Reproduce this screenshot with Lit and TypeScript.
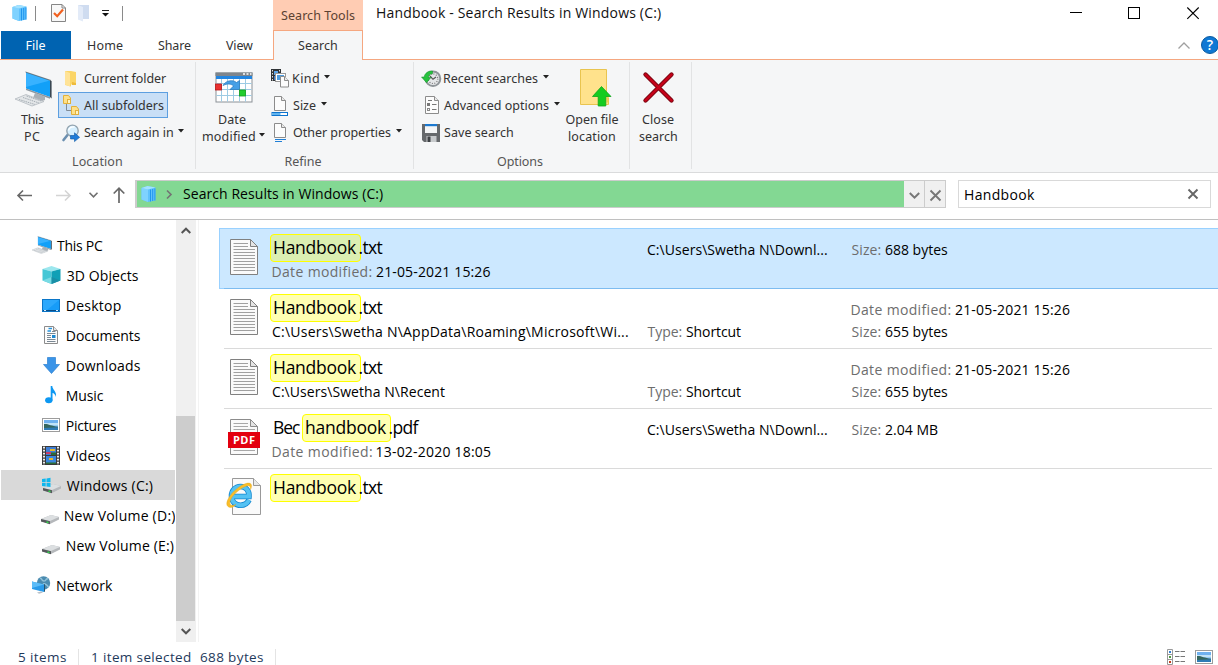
import { LitElement, html, css, svg, nothing } from "lit";
import { customElement, property } from "lit/decorators.js";

const canvas = document.createElement("canvas").getContext("2d")!;

/** A single-line label whose tracking is tuned so that its ink spans `w` pixels. */
@customElement("fit-text")
class FitText extends LitElement {
  @property() text = "";
  @property({ type: Number }) w = 0;
  static styles = css`
    :host { display: block; flex: none; white-space: pre; overflow: visible; }
    span { display: block; }
  `;
  render() {
    return html`<span>${this.text}</span>`;
  }
  updated() {
    const span = this.renderRoot.querySelector("span") as HTMLElement;
    const cs = getComputedStyle(this);
    canvas.font = `${cs.fontWeight} ${cs.fontSize} ${cs.fontFamily}`;
    const m = canvas.measureText(this.text);
    const ink = m.actualBoundingBoxLeft + m.actualBoundingBoxRight;
    const n = this.text.length - 1;
    this.style.width = `${this.w}px`;
    if (n > 0) span.style.letterSpacing = `${(this.w - ink) / n}px`;
    span.style.marginLeft = `${m.actualBoundingBoxLeft}px`;
  }
}

const t = (text: string, w: number, cls = "") =>
  html`<fit-text class=${cls} .text=${text} .w=${w}></fit-text>`;

const ic = (w: number, h: number, body: unknown, cls = "") =>
  html`<svg class="ic ${cls}" width=${w} height=${h} viewBox="0 0 ${w} ${h}">${body}</svg>`;

const arrow = ic(6, 4, svg`<path d="M0 0H6L3 3.500Z" fill="#222"/>`, "arrow");

const cube = ic(15, 18, svg`
  <path d="M.5 3L6.500 1L14.500 2.500V15.500L7 17L.5 14.500Z" fill="#5fc1fc"/>
  <path d="M.5 3L7 4.500V17L.5 14.500Z" fill="#7fd2ff"/>
  <path d="M.5 3L6.500 1L14.500 2.500L7 4.500Z" fill="#a3e2ff"/>
  <path d="M9.500 4.500V16.500M11.700 4V16M13.900 3.500V15.500" stroke="#2196ee" stroke-width="1"/>`);

const pcShape = svg`
  <path d="M11 1.500L35 9.500V26L11 17.500Z" fill="#12a0f8"/>
  <path d="M11 1.500L35 9.500L11 16Z" fill="#38b2ff"/>
  <path d="M10.500 1L36 9.500" stroke="#3a4752" stroke-width=".7"/>
  <path d="M35 9.500L36.600 10V27.500L35 26Z" fill="#3a4752"/>
  <path d="M11 17.500L35 26V27.800L11 19Z" fill="#8e979f"/>
  <path d="M20 22L30 25.700V29L26 30.500L18 27Z" fill="#a8afb5"/>
  <path d="M0 28L11 23.500L29 30.500L17 35Z" fill="#e3e6e8" stroke="#b4bac0" stroke-width=".8"/>
  <path d="M4 28.500L20 33.500M8 26.500L24 32M11.500 25L27 30.300" stroke="#9da6ae" stroke-width=".9" stroke-dasharray="1.500 .8"/>`;
const pcBig = html`<svg class="ic" width="37" height="36" viewBox="0 0 37 36">${pcShape}</svg>`;
const pcSmall = html`<svg class="ic" width="20" height="18" viewBox="0 0 37 36" preserveAspectRatio="none">${pcShape}</svg>`;

const folder = ic(13, 17, svg`
  <path d="M1 1H7L12 2V14.500H7V16.500L1 15Z" fill="#fbd567"/>
  <path d="M1 1L6 3V16.500L1 14.500Z" fill="#ffe397"/><path d="M8 12V15H12V13Z" fill="#eebb3c"/>`);
const folderPale = ic(13, 18, svg`
  <path d="M1 1H12V15H6V17L1 15Z" fill="#cfdcf0"/><path d="M1 1L6 3V17.500L1 15.500Z" fill="#e3ebf8"/>`);
const subfolders = ic(17, 20, svg`
  <path d="M3.500 9V15.500H9" fill="none" stroke="#7f8b97" stroke-width="1"/>
  <path d="M.5 .5H5.500L7.500 3V8.500H.5Z" fill="#fde08a" stroke="#e2b13c"/><rect x="4.500" y="4.500" width="3" height="4" fill="#fff3c4" stroke="#e2b13c"/>
  <path d="M8.500 11.500H13.500L15.500 14V19.500H8.500Z" fill="#fde08a" stroke="#e2b13c"/><rect x="12.500" y="15.500" width="3" height="4" fill="#fff3c4" stroke="#e2b13c"/>`);
const searchAgain = ic(18, 18, svg`
  <path d="M5.500 11L1.500 16" stroke="#6b8fb0" stroke-width="2.600" stroke-linecap="round"/>
  <circle cx="10.500" cy="6.800" r="5.700" fill="#d5efff" stroke="#93a3af" stroke-width="1.400"/>
  <path d="M6.500 6.500C7.500 3.500 10 2.600 12.500 3" stroke="#fff" fill="none" stroke-width="1.300"/>
  <path d="M8.500 11.500H12.500V8.800L17.600 13.300L12.500 17.600V15H8.500Z" fill="#1f7bd8" stroke="#0f5aa8" stroke-width=".6"/>`);

const calendar = ic(38, 31, svg`
  <rect x="1" y="1" width="36" height="29" fill="#fff" stroke="#8b9197"/>
  <rect x=".5" y=".5" width="37" height="3.500" fill="#7e858c"/>
  <path d="M28 2H30M31.500 2H33.500M35 2H36.500" stroke="#fff" stroke-width="1.400"/>
  <rect x="1" y="4" width="36" height="3" fill="#2285e0"/>
  <path d="M6.500 7V29.500M12.500 7V29.500M18.500 7V29.500M24.500 7V29.500M30.500 7V29.500M1.500 11.500H36.500M1.500 17.500H36.500M1.500 23.500H36.500" stroke="#9dcbe4"/>
  <path d="M8 13.500C11 8 18 7.500 21.500 10.500L24.500 8.500V17.500H15L18.500 14C16 11.500 12 11.500 8 13.500Z" fill="#459fe6" stroke="#2274ba" stroke-width=".7"/>
  <rect x=".5" y="12" width="6" height="6" fill="#e93030" stroke="#b81717" stroke-width=".8"/>
  <rect x="24.500" y="18" width="6" height="6" fill="#22cd2d" stroke="#149c1d" stroke-width=".8"/>`);

const page = (x: number, y: number, w: number, h: number, c = "#8c8c8c") => svg`
  <path d="M${x} ${y}H${x + w - 4}L${x + w} ${y + 4}V${y + h}H${x}Z" fill="#fcfcfc" stroke=${c}/>
  <path d="M${x + w - 4} ${y}V${y + 4}H${x + w}" fill="#e9e9e9" stroke=${c}/>`;

const kind = ic(18, 19, svg`
  <rect x="0" y="0" width="10" height="12" fill="#2f3336"/>
  <path d="M1.500 1V12M8.500 1V12" stroke="#ddd" stroke-width="1" stroke-dasharray="1.500 1.500"/>
  <rect x="3" y="2" width="4" height="4" fill="#5aa3e8"/><rect x="3" y="7" width="4" height="4" fill="#3577c9"/>
  <rect x="4.500" y="4.500" width="10" height="8" fill="#fff" stroke="#999"/><rect x="6" y="6" width="7" height="5" fill="#4c9ce0"/>
  ${page(9.5, 7.500, 8, 10.5)}`);
const sizeIc = ic(18, 20, svg`${page(3.5, 0.5, 11, 14)}
  <rect x="1" y="16.500" width="15.500" height="3" fill="#fff" stroke="#0d74cf"/><rect x="1.500" y="17" width="8" height="2" fill="#60b4ee"/>`);
const propsIc = ic(18, 20, svg`${page(3.5, 0.5, 11, 14)}
  <path d="M4 16.500H15M4 18.500H11" stroke="#1f7fd6"/>`);

const recent = ic(19, 18, svg`
  <circle cx="11" cy="8.700" r="7.300" fill="#e4e6e8" stroke="#8f9599" stroke-width="2"/>
  <circle cx="11" cy="8.700" r="4.800" fill="none" stroke="#777" stroke-width="1.200" stroke-dasharray="1 1.500"/>
  <path d="M8 6L11 9.300L14 7" stroke="#555" fill="none" stroke-width="1.200"/>
  <path d="M10.500 1C6 .600 2.600 3.500 2.200 7H-.500L4.500 12.700L9 7.500H6.400C6.700 5 8 3.800 10.500 3.800Z" fill="#27c23f" stroke="#128a28" stroke-width=".5"/>`);
const advanced = ic(17, 19, svg`${page(2.5, 0.5, 13, 17)}
  <rect x="4" y="7" width="3" height="3" fill="#777"/><rect x="4.500" y="12.500" width="2" height="2" fill="none" stroke="#888"/>
  <path d="M5 4.500H9M9 8.500H13.500M9 13.500H13.500" stroke="#777"/>`);
const save = ic(18, 18, svg`
  <path d="M0 0H18V18H2L0 16Z" fill="#66696c"/><rect x="3" y="0" width="12" height="9" fill="#f4f5f6"/>
  <rect x="3" y="0" width="12" height="2.200" fill="#1c79d0"/><rect x="4.500" y="12" width="10" height="6" fill="#c7cacc"/><rect x="5.500" y="12.500" width="3" height="5.500" fill="#3e4144"/>`);
const openFile = ic(32, 38, svg`
  <path d="M.5 .5H26.500V27L28.500 29V35.500H.500Z" fill="#ffe28c" stroke="#e9c44f"/>
  <path d="M26.500 27V33.500H28.500V28Z" fill="#f4cd54"/>
  <path d="M21.500 17.500L31 27.500H25.800V37H18.200V27.500H12.500Z" fill="#15cc20" stroke="#0fa619" stroke-width=".8"/>`);
const closeBig = ic(31, 31, svg`
  <path d="M2.500 2.500L28.500 28.500M28.500 2.500L2.500 28.500" stroke="#7f0713" stroke-width="4.400" stroke-linecap="round"/>
  <path d="M2.500 2.500L28.500 28.500M28.500 2.500L2.500 28.500" stroke="#c80219" stroke-width="2.400" stroke-linecap="round"/>`);

const checkDoc = ic(15, 18, svg`
  <path d="M.5 .5H11L14.500 4V17.500H.500Z" fill="#f8f8f8" stroke="#868686"/><path d="M11 .5V4H14.500" fill="none" stroke="#868686"/>
  <path d="M3 9L6.200 12.200L12 5.500" fill="none" stroke="#f1601f" stroke-width="2.200"/>`);
const qatArrow = ic(7, 7, svg`<path d="M0 .5H7" stroke="#222"/><path d="M0 3H7L3.500 6.500Z" fill="#111"/>`);

const objects3d = ic(19, 18, svg`
  <path d="M.500 3L9.500 0L18.500 3L9.500 5.500Z" fill="#9ce7ee"/><path d="M.500 3L9.500 5.500V18L.500 14.500Z" fill="#45c7d6"/>
  <path d="M9.500 5.500L18.500 3V14.500L9.500 18Z" fill="#10a0b6"/><path d="M.500 14.500L9.500 11V18Z" fill="#79dbe4"/><path d="M9.500 11L18.500 14.500L9.500 18Z" fill="#1a8fa6"/>`);
const desktop = ic(18, 13, svg`
  <rect x=".5" y=".5" width="17" height="12" fill="#179cf8" stroke="#0b76c8"/><path d="M1 11.500H17" stroke="#0b4d86"/>
  <path d="M1 1H17L5 11H1Z" fill="#3bb0ff" opacity=".6"/><path d="M2 11.500H4M14 11.500H16" stroke="#d9efff"/>`);
const documents = ic(16, 18, svg`${page(1.5, 0.5, 13, 17)}
  <path d="M5.500 2.500H9M4.500 5H8" stroke="#2493dd" stroke-width="1.500"/>
  <path d="M9 5.500H12.500M4 7.500H12.500M4 9.500H8M4 11.500H8M4 13.500H12.500M4 15.500H12.500" stroke="#7a8894"/><rect x="9" y="9" width="3.500" height="3" fill="#1f88cf"/>`);
const downloads = ic(17, 17, svg`<path d="M4.500 .5H12.500V7.500H16.500L8.500 16.500L.500 7.500H4.500Z" fill="#3a94e8" stroke="#2b7fd0" stroke-width=".7"/>`);
const music = ic(12, 18, svg`
  <ellipse cx="3.800" cy="14.300" rx="3.700" ry="3" fill="#0d98f2"/>
  <path d="M5.700 0H7.300C7.500 4 11.800 5 11 11C10.300 8.500 9 7.200 7.500 7V14.500H5.700Z" fill="#0d98f2"/>`);
const picture = (w: number, h: number) => html`<svg class="ic" width=${w} height=${h} viewBox="0 0 18 14" preserveAspectRatio="none">
  <rect x=".5" y=".5" width="17" height="13" fill="#fff" stroke="#9c9c9c"/><rect x="2" y="2" width="14" height="10" fill="#6fb1ef"/>
  <path d="M2 5H16V7.500H2Z" fill="#c2e3f7"/><path d="M2 6C6 5.500 9 8 16 8.700V12H2Z" fill="#35665e"/><path d="M2 10L16 9.200V12H2Z" fill="#2f7bb5"/></svg>`;
const videos = ic(18, 19, svg`
  <rect width="18" height="19" fill="#3a3a3a"/><path d="M2 .800V19M16 .800V19" stroke="#eee" stroke-width="2" stroke-dasharray="1.600 1.400"/>
  <rect x="4" y="1" width="10" height="8" fill="#3f7ed4"/><rect x="4" y="10" width="10" height="8" fill="#3a86dc"/>
  <path d="M8 3H13V5H8ZM7 12H11V14H7Z" fill="#e6b62c"/><path d="M4 6H9V8H4Z" fill="#c73a6a"/><path d="M9 6.500H14V9H9ZM4 16.500H14V18H4Z" fill="#2d6b36"/>`);
const driveBody = svg`
  <path d="M0 11L10 7L18 9V11.500L9 16L0 13.200Z" fill="#b5b8bb"/><path d="M0 11L10 7L18 9L9 13Z" fill="#dcdfe1"/>
  <path d="M0 11L9 13.200V16.200L0 13.500Z" fill="#55585b"/><path d="M5.500 14L7.500 14.600" stroke="#2fe04a" stroke-width="1.400"/>`;
const drive = ic(18, 18, svg`<g transform="translate(0,2)">${driveBody}</g>`);
const driveC = ic(19, 17, svg`<g transform="translate(1,0)">${driveBody}</g>
  <path d="M0 2L3.700 1.500V5H0ZM4.500 1.400L8.500 .800V5H4.500ZM0 5.800H3.700V9.400L0 8.900ZM4.500 5.800H8.500V10L4.500 9.500Z" fill="#10b7ee"/>`);
const network = ic(19, 18, svg`
  <circle cx="11.500" cy="7" r="6.700" fill="#4a8bb0"/><path d="M8 2C11 3 9 5 12 5C15 5 13 2 16 3M11 8C13 7 15 9 16.500 11" stroke="#8fc0d8" stroke-width="1.500" fill="none"/>
  <path d="M0 5.500L12 8.500V16L0 13Z" fill="#2a9bea"/><path d="M0 5.500L12 8.500L0 12Z" fill="#5bbcf8"/><path d="M12 8.500L13 8V15.500L12 16Z" fill="#25536f"/>
  <path d="M5 16.500L9 15.600L11 16.500L7 17.800Z" fill="#b7bec4"/>`);

const textDoc = ic(28, 36, svg`
  <path d="M.5 .5H20.500L27.500 7.500V35.500H.500Z" fill="#fafafa" stroke="#808080"/><path d="M20.500 .5V7.500H27.500Z" fill="#e4e4e4" stroke="#808080"/>
  <path d="M3.500 4.500H18M3.500 7.500H18M3.500 10.500H25M3.500 13.500H25M3.500 16.500H25M3.500 19.500H25M3.500 22.500H25M3.500 25.500H25M3.500 28.500H25M3.500 31.500H25" stroke="#a0a0a0"/>`);
const pdfDoc = ic(32, 36, svg`
  <path d="M2.500 .5H22.500L29.500 7.500V35.500H2.500Z" fill="#fafafa" stroke="#8c8c8c"/><path d="M22.500 .5V7.500H29.500Z" fill="#e4e4e4" stroke="#8c8c8c"/>
  <path d="M5.500 4.500H20M5.500 7.500H20M5.500 10.500H27M5.500 31.500H27" stroke="#a8a8a8"/>
  <rect x="0" y="13" width="32" height="16" fill="#e3000f"/>
  <text x="16.200" y="25" text-anchor="middle" font-family="Open Sans, sans-serif" font-weight="700" font-size="11" letter-spacing=".5" fill="#fff">PDF</text>`);
const ieDoc = ic(34, 37, svg`
  <path d="M5.500 .5H26.500L33.500 7.500V36.500H5.500Z" fill="#fafafa" stroke="#999"/><path d="M26.500 .5V7.500H33.500" fill="#e8e8e8" stroke="#999"/>
  <path d="M5.500 18.500H22C22.500 12.500 18.500 8.500 13.500 8.500C8 8.500 4.500 13 4.500 18C4.500 23.500 8.500 27.200 13.500 27.200C17.500 27.200 20.500 25.200 22 22" fill="none" stroke="#1689d0" stroke-width="5.600"/>
  <path d="M6.500 18.500H22C22.500 12.500 18.500 8.500 13.500 8.500C8 8.500 4.500 13 4.500 18C4.500 23.500 8.500 27.200 13.500 27.200C17.500 27.200 20.500 25.200 22 22" fill="none" stroke="#54c2f3" stroke-width="4"/>
  <path d="M1 28.500C-4 24 8 9 19 5.500C24 4 26 7 23.500 11.500C24 8.500 22.500 7 19.500 8C10 11.500 .8 22 3.300 26.500C4.500 28 7 27.500 9 26.500C6 29.800 3 30 1 28.500Z" fill="#f9bd2a" stroke="#e4a312" stroke-width=".4"/>`);

const nav: [unknown, string, number, number][] = [
  [pcSmall, "This PC", 46, 0], [objects3d, "3D Objects", 72, 1], [desktop, "Desktop", 54, 1],
  [documents, "Documents", 74, 1], [downloads, "Downloads", 74, 1], [music, "Music", 37, 1],
  [picture(18, 14), "Pictures", 50, 1], [videos, "Videos", 44, 1], [driveC, "Windows (C:)", 86, 1],
  [drive, "New Volume (D:)", 110.5, 1], [drive, "New Volume (E:)", 107, 1], [network, "Network", 56, 0],
];

type Pair = [string, number, string, number];
interface Result {
  icon: unknown; pre?: [string, number]; hit: [string, number]; ext: [string, number];
  sub?: Pair | [string, number]; mid?: Pair | [string, number]; right?: Pair[];
}
const pathCol: [string, number] = ["C:\\Users\\Swetha N\\Downl...", 180];
const stamp = "21-05-2021 15:26";
const results: Result[] = [
  { icon: textDoc, hit: ["Handbook", 83], ext: [".txt", 23], sub: ["Date modified:", 99, stamp, 114.5], mid: pathCol, right: [["Size:", 29, "688 bytes", 63]] },
  { icon: textDoc, hit: ["Handbook", 83], ext: [".txt", 23], sub: ["C:\\Users\\Swetha N\\AppData\\Roaming\\Microsoft\\Wi...", 356], mid: ["Type:", 34, "Shortcut", 55], right: [["Date modified:", 99, stamp, 115], ["Size:", 29, "655 bytes", 63]] },
  { icon: textDoc, hit: ["Handbook", 83], ext: [".txt", 23], sub: ["C:\\Users\\Swetha N\\Recent", 173], mid: ["Type:", 34, "Shortcut", 55], right: [["Date modified:", 99, stamp, 115], ["Size:", 29, "655 bytes", 63]] },
  { icon: pdfDoc, pre: ["Bec", 26], hit: ["handbook", 81], ext: [".pdf", 30], sub: ["Date modified:", 99.5, "13-02-2020 18:05", 114.5], mid: pathCol, right: [["Size:", 29, "2.04 MB", 53]] },
  { icon: ieDoc, hit: ["Handbook", 83], ext: [".txt", 23] },
];
const line = (p?: Pair | [string, number]) =>
  !p ? nothing : p.length === 2 ? html`<div class="ln">${t(p[0], p[1])}</div>`
    : html`<div class="ln">${t(p[0], p[1], "dim")}${t(p[2]!, p[3]!)}</div>`;

@customElement("app-root")
class AppRoot extends LitElement {
  static styles = css`
    :host { display: flex; flex-direction: column; box-sizing: border-box; width: 1218px; height: 665px; overflow: hidden; background: #fff; color: #000; font: 14px/20px "Open Sans", "Noto Sans", sans-serif; }
    * { box-sizing: border-box; }
    .ic { display: block; flex: none; overflow: visible; }
    .head { display: grid; grid-template-columns: 273px 90px 1fr; grid-template-rows: 31px 29px; flex: none; font-size: 12.5px; color: #333; font-family: "Noto Sans", sans-serif; }
    .qat { display: flex; align-items: center; padding: 0 0 5px 12px; }
    .qat .sep { width: 1px; height: 15px; background: #8a8a8a; margin: 0 15px 0 8px; }
    .qat .g1 { width: 11px; } .qat .g2 { width: 12px; } .qat .g3 { width: 5px; }
    .tools { background: #ffccb3; display: flex; justify-content: center; align-items: center; color: #5b4132; border-bottom: 1px solid #f5a780; padding-top: 2px; }
    .title { display: flex; align-items: center; justify-content: space-between; padding: 0 19px 5px 14px; font: 14px/20px "Open Sans", sans-serif; color: #111; }
    .caps { display: flex; align-items: center; gap: 46px; }
    .caps .last { margin-left: 1px; }
    .tabs { display: flex; padding-left: 1px; border-bottom: 1px solid #f5a780; line-height: 30px; height: 29px; }
    .file { width: 70px; background: #0063b1; color: #fff; display: flex; justify-content: center; margin-right: 17px; }
    .tabs .h { margin-right: 35px; }
    .active { display: flex; justify-content: center; border: 1px solid #f5a780; border-width: 0 1px; background: #f5f6f7; line-height: 30px; padding-right: 1px; height: 29px; }
    .rest { display: flex; justify-content: flex-end; align-items: center; gap: 11px; border-bottom: 1px solid #f5a780; margin-left: -1px; }
    .rest .help { margin-right: -1px; }
    .ribbon { display: flex; height: 113px; flex: none; background: #f5f6f7; border-bottom: 1px solid #dadbdc; padding: 2px 0 3px 1px; font: 12.5px/17px "Noto Sans", sans-serif; color: #333; }
    .grp { display: flex; flex-direction: column; border-right: 1px solid #e2e3e4; padding-top: 3px; }
    .loc { width: 195px; } .ref { width: 218px; } .opt { width: 216px; } .cls { width: 62px; }
    .cols { display: flex; height: 81px; }
    .cap { align-self: center; margin-top: 6px; line-height: 20px; color: #555; }
    .loc .cap { margin-right: 1px; } .ref .cap { margin-right: 2px; } .opt .cap { margin-right: 3px; }
    .big { display: flex; flex-direction: column; align-items: center; }
    .big .box { height: 46px; display: flex; align-items: center; padding-bottom: 2px; }
    .row { display: flex; align-items: center; height: 27px; line-height: 27px; }
    .row .slot { display: flex; justify-content: center; flex: none; }
    .arrow { margin: 0 0 3px 5px; }
    .sel { height: 26px; width: 110px; margin-bottom: 1px; background: #c9dff6; border: 1px solid #5d9fe0; }
    .loc .slot { width: 17px; margin: 0 5px 0 4px; } .loc .sel .slot { margin-left: 4px; margin-right: 4px; }
    .loc .big { width: 57px; padding-left: 6px; } .loc .big .box { padding: 2px 0 0 1px; } .ref .big { width: 75px; padding-right: 2px; } .ref .slot { width: 18px; margin-right: 4px; } .ref .box { margin-left: 2px; }
    .opt .small { width: 142px; padding-left: 8px; } .opt .slot { width: 18px; margin-right: 4px; } .opt .big { width: 72px; } .opt .big .box { padding: 0 0 0 7px; } .cls .big { width: 56px; } .cls .box { margin-left: 1px; }
    .modrow { display: flex; align-items: center; margin-left: 3px; } .modrow .arrow { margin-left: 4px; }
    .addr { display: flex; align-items: center; height: 47px; flex: none; border-bottom: 1px solid #c0c0c0; padding-left: 17px; }
    .navs { display: flex; align-items: center; width: 118px; padding-bottom: 2px; }
    .navs .f { margin: 0 18px 0 24px; } .navs .u { margin-left: 15px; }
    .crumb { display: flex; width: 811px; height: 28px; margin-bottom: 4px; border: 1px solid #ccc; border-left-width: 2px; background: #f0f0f0; }
    .crumb .green { display: flex; align-items: center; width: 767px; background: #83d893; padding: 0 0 0 4px; }
    .crumb .chev { margin: 0 11px 0 10px; }
    .crumb .b { width: 20px; display: flex; align-items: center; justify-content: center; padding: 2px 0 0 1px; }
    .crumb .b2 { border-left: 1px solid #ccc; width: 21px; }
    .find { display: flex; align-items: center; justify-content: space-between; width: 253px; height: 28px; border: 1px solid #d9d9d9; margin-left: 12px; padding: 0 12px 0 6px; margin-bottom: 4px; }
    .find fit-text { margin-top: 1px; }
    .body { display: flex; height: 422px; flex: none; }
    .side { width: 174px; margin-left: 1px; overflow: hidden; padding-top: 10px; }
    .nav { display: flex; align-items: center; height: 30px; line-height: 28px; padding-left: 31px; }
    .nav fit-text { padding-top: 2px; }
    .nav.in { padding-left: 40px; } .nav .slot { width: 20px; display: flex; justify-content: center; margin-right: 5px; }
    .nav.in .slot { margin-right: 5.8px; }
    .nav.on { background: #d9d9d9; } .nav.last { margin-top: 10px; } .nav.last .slot { padding-right: 2px; }
    .bar { width: 20px; margin-left: 1px; background: #f0f0f0; display: flex; flex-direction: column; justify-content: flex-end; align-items: center; padding-right: 1px; }
    .bar .up { margin: 7px 0 auto; } .bar .thumb { width: 19px; height: 205px; background: #cdcdcd; align-self: flex-start; } .bar .dn { margin: 7px 0; }
    .list { flex: 1; border-left: 1px solid #f3f3f3; margin-left: 2px; padding: 8px 0 0 20px; min-width: 0; }
    .item { position: relative; display: flex; height: 60px; line-height: 20px; padding-left: 5px; }
    .item::after { content: ""; position: absolute; left: 5px; right: 6px; bottom: -1px; height: 1px; background: #dadada; }
    .item.on { background: #cce8ff; box-shadow: inset 1px 1px #99d1ff, 0 1px #99d1ff; } .item.on::after { background: #7dbcf0; right: 0; }
    .item:last-child::after { display: none; }
    .iconbox { width: 40px; display: flex; justify-content: center; align-items: flex-start; padding-top: 11px; margin-right: 8px; }
    .iconbox.ie { padding-top: 10px; }
    .c1 { width: 375px; } .c2 { width: 204px; }
    .name { display: flex; font-size: 17.5px; line-height: 24px; padding: 7px 0 0 2px; height: 33px; }
    .hit { position: relative; margin-right: 2.5px; }
    .hit::before { content: ""; position: absolute; left: -4px; right: -4px; top: -1px; height: 26px; border: 1.5px solid #ff0; border-radius: 4px; background: rgba(255, 255, 0, .3); }
    .name fit-text { position: relative; z-index: 1; }
    .pre { margin-right: 6px; }
    .ln { display: flex; height: 22px; line-height: 21px; gap: 4.5px; }
    .dim { color: #6d6d6d; margin-left: .5px; }
    .c2, .c3 { padding-top: 11px; } .c2.low { padding-top: 33px; }
    .status { display: flex; align-items: center; flex: 1; padding: 6px 5px 0 18px; line-height: 18px; color: #1e395b; font-size: 13.5px; }
    .status i { width: 1px; height: 16px; background: #e4e4e4; margin: 0 13px 0 12px; } .status .s { margin-left: 9px; }
    .status .views { margin-left: auto; display: flex; gap: 10px; align-items: center; }
  `;

  private small(icon: unknown, text: string, w: number, more = false, sel = false) {
    return html`<div class="row ${sel ? "sel" : ""}"><div class="slot">${icon}</div>${t(text, w)}${more ? arrow : nothing}</div>`;
  }

  render() {
    return html`
      <div class="head">
        <div class="qat">${cube}<div class="sep"></div>${checkDoc}<div class="g1"></div>${folderPale}<div class="g2"></div>${qatArrow}<div class="g3"></div><div class="sep"></div></div>
        <div class="tools">${t("Search Tools", 74)}</div>
        <div class="title">${t("Handbook - Search Results in Windows (C:)", 284)}
          <div class="caps">
            ${ic(12, 13, svg`<path d="M0 5.500H12" stroke="#000"/>`)}
            ${ic(12, 13, svg`<rect x=".5" y=".5" width="11" height="11" fill="none" stroke="#000"/>`)}
            ${ic(12, 13, svg`<path d="M.3 .500L11.700 11.900M11.700 .500L.300 11.900" stroke="#000" stroke-width="1.100"/>`, "last")}
          </div>
        </div>
        <div class="tabs"><div class="file">${t("File", 19)}</div>${t("Home", 35, "h")}${t("Share", 33, "h")}${t("View", 27)}</div>
        <div class="active">${t("Search", 39)}</div>
        <div class="rest">
          ${ic(12, 7, svg`<path d="M.500 6.500L6 1L11.500 6.500" fill="none" stroke="#a0a0a0" stroke-width="1.300"/>`)}
          ${ic(18, 18, svg`<circle cx="9" cy="9" r="8.500" fill="#0f78d4" stroke="#0a5a9f"/><text x="9" y="14" text-anchor="middle" font-family="Open Sans, sans-serif" font-weight="600" font-size="14" fill="#fff">?</text>`, "help")}
        </div>
      </div>
      <div class="ribbon">
        <div class="grp loc">
          <div class="cols">
            <div class="big"><div class="box">${pcBig}</div>${t("This", 23)}${t("PC", 15)}</div>
            <div>${this.small(folder, "Current folder", 82)}${this.small(subfolders, "All subfolders", 80, false, true)}${this.small(searchAgain, "Search again in", 89, true)}</div>
          </div>
          ${t("Location", 49, "cap")}
        </div>
        <div class="grp ref">
          <div class="cols">
            <div class="big"><div class="box">${calendar}</div>${t("Date", 27)}<div class="modrow">${t("modified", 52)}${arrow}</div></div>
            <div>${this.small(kind, "Kind", 26, true)}${this.small(sizeIc, "Size", 23, true)}${this.small(propsIc, "Other properties", 98, true)}</div>
          </div>
          ${t("Refine", 36, "cap")}
        </div>
        <div class="grp opt">
          <div class="cols">
            <div class="small">${this.small(recent, "Recent searches", 94, true)}${this.small(advanced, "Advanced options", 105, true)}${this.small(save, "Save search", 69)}</div>
            <div class="big"><div class="box">${openFile}</div>${t("Open file", 53)}${t("location", 46)}</div>
          </div>
          ${t("Options", 46, "cap")}
        </div>
        <div class="grp cls"><div class="cols"><div class="big"><div class="box">${closeBig}</div>${t("Close", 32)}${t("search", 38)}</div></div></div>
      </div>
      <div class="addr">
        <div class="navs">
          ${ic(15, 11, svg`<path d="M15 5.500H1M6 .500L1 5.500L6 10.500" fill="none" stroke="#686868" stroke-width="1.600"/>`)}
          ${ic(15, 11, svg`<path d="M0 5.500H14M9 .500L14 5.500L9 10.500" fill="none" stroke="#d4d4d4" stroke-width="1.600"/>`, "f")}
          ${ic(9, 6, svg`<path d="M.500 .800L4.500 4.800L8.500 .800" fill="none" stroke="#707070" stroke-width="1.600"/>`)}
          ${ic(12, 16, svg`<path d="M6 16V1.500M.700 6.500L6 1.200L11.300 6.500" fill="none" stroke="#686868" stroke-width="1.700"/>`, "u")}
        </div>
        <div class="crumb">
          <div class="green">${cube}${ic(6, 9, svg`<path d="M1 .500L5 4.500L1 8.500" fill="none" stroke="#737373" stroke-width="1.600"/>`, "chev")}${t("Search Results in Windows (C:)", 200)}</div>
          <div class="b">${ic(11, 7, svg`<path d="M.800 1L5.500 5.700L10.200 1" fill="none" stroke="#777" stroke-width="2"/>`)}</div>
          <div class="b b2">${ic(11, 11, svg`<path d="M.500 .500L10.500 10.500M10.500 .500L.500 10.500" stroke="#777" stroke-width="1.900"/>`)}</div>
        </div>
        <div class="find">${t("Handbook", 70)}${ic(10, 10, svg`<path d="M.500 .500L9.500 9.500M9.500 .500L.500 9.500" stroke="#666" stroke-width="1.900"/>`)}</div>
      </div>
      <div class="body">
        <div class="side">${nav.map(([i, s, w, d]) => html`<div class="nav ${d ? "in" : ""} ${s === "Windows (C:)" ? "on" : ""} ${s === "Network" ? "last" : ""}"><div class="slot">${i}</div>${t(s, w)}</div>`)}</div>
        <div class="bar">
          ${ic(10, 7, svg`<path d="M.700 6L5 1.700L9.300 6" fill="none" stroke="#555" stroke-width="2"/>`, "up")}
          <div class="thumb"></div>
          ${ic(10, 7, svg`<path d="M.700 1L5 5.300L9.300 1" fill="none" stroke="#555" stroke-width="2"/>`, "dn")}
        </div>
        <div class="list">
          ${results.map((r, i) => html`<div class="item ${i === 0 ? "on" : ""}">
            <div class="iconbox ${i === 4 ? "ie" : ""}">${r.icon}</div>
            <div class="c1"><div class="name">${r.pre ? t(r.pre[0], r.pre[1], "pre") : nothing}<div class="hit">${t(r.hit[0], r.hit[1])}</div>${t(r.ext[0], r.ext[1])}</div>${line(r.sub)}</div>
            <div class="c2 ${r.mid?.length === 4 ? "low" : ""}">${line(r.mid)}</div>
            <div class="c3">${r.right?.map((p) => line(p))}</div>
          </div>`)}
        </div>
      </div>
      <div class="status">${t("5 items", 48)}<i></i>${t("1 item selected", 99)}${t("688 bytes", 63, "s")}<i></i>
        <div class="views">
          ${ic(18, 16, svg`<path d="M.500 .500H5.500V15.500H.500ZM.500 5.500H5.500M.500 10.500H5.500" fill="none" stroke="#999"/><path d="M8 2.500H12.500M13.500 2.500H18M8 7.500H12.500M13.500 7.500H18M8 12.500H12.500M13.500 12.500H18" stroke="#777"/><rect x="2" y="2" width="2" height="2" fill="#2f7cd0"/><rect x="2" y="7" width="2" height="2" fill="#4a9a3a"/><rect x="2" y="12" width="2" height="2" fill="#c33c1a"/>`)}
          ${picture(18, 14)}
        </div>
      </div>`;
  }
}
